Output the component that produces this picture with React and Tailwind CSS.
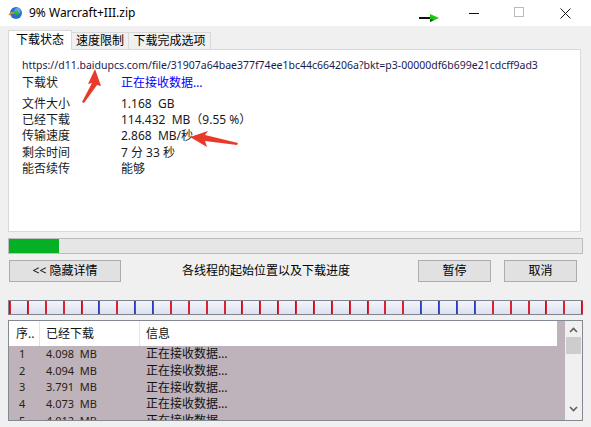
import React from "react";

const FONT = { fontFamily: '"Noto Sans", "Noto Sans CJK SC", sans-serif' };

const ticks = [
  "b","b","r","r","b","b","r","b","b","r","r","r","r","b","b","b",
  "b","b","b","b","b","r","r","b","b","b","b","r","r","r","b","r","b",
];

function ThreadBar() {
  return (
    <div className="relative mt-[18px] h-[15px] w-[575px] border border-[#7d8391] bg-gradient-to-b from-[#f4f5fb] to-[#dde0ee]">
      {ticks.map((t, i) => (
        <div
          key={i}
          className="absolute top-0 h-full w-[2px]"
          style={{
            left: `${Math.round(i * 17.88)}px`,
            background:
              t === "b"
                ? "linear-gradient(to right,#2a3cc0 0%,#2a3cc0 45%,#e0202a 46%,#e0202a 100%)"
                : "#e0202a",
          }}
        />
      ))}
    </div>
  );
}

function Row({ label, value, className = "", valueClass = "" }) {
  return (
    <div className={`flex h-[16px] items-center text-[12px] leading-[16px] text-[#1a1a1a] ${className}`}>
      <div className="w-[99px]">{label}</div>
      <div className={`whitespace-pre ${valueClass}`}>{value}</div>
    </div>
  );
}

const listRows = [
  ["1", "4.098  MB"],
  ["2", "4.094  MB"],
  ["3", "3.791  MB"],
  ["4", "4.073  MB"],
  ["5", "4.012  MB"],
];

export default function App() {
  return (
    <div className="relative h-[427px] w-[591px] overflow-hidden bg-[#f0f0f0]" style={FONT}>
      {/* title bar */}
      <div className="relative flex h-[26px] items-center bg-white">
        <svg className="ml-[8px]" width="15" height="14" viewBox="0 0 15 14">
          <circle cx="8" cy="7" r="6" fill="#2a6fcf" />
          <circle cx="9.5" cy="5" r="3" fill="#7ec0ff" opacity="0.7" />
          <path d="M1 9 Q4 3 9 6 L8 3.5 L12 7.5 L7 10 L8 8 Q4 7 1 9Z" fill="#2fb52f" />
          <path d="M1 9 Q3 6 6 7" stroke="#f08a1c" strokeWidth="1.6" fill="none" />
        </svg>
        <span className="ml-[6px] text-[12px] text-[#000]">9% Warcraft+III.zip</span>
        {/* green arrow indicator */}
        <div className="absolute left-[419px] top-[14px] flex items-center">
          <div className="h-[2px] w-[11px] bg-[#111]" />
          <svg width="9" height="8" viewBox="0 0 9 8">
            <polygon points="0,0 9,4 0,8" fill="#16c716" />
            <polygon points="0,5 4,6 0,8" fill="#0a5a0a" />
          </svg>
        </div>
        <div className="absolute left-[469px] top-[13px] h-[1px] w-[10px] bg-[#111]" />
        <div className="absolute left-[514px] top-[7px] h-[10px] w-[10px] border border-[#bbb]" />
        <svg className="absolute left-[560px] top-[8px]" width="11" height="11" viewBox="0 0 11 11">
          <path d="M0.5 0.5 L10.5 10.5 M10.5 0.5 L0.5 10.5" stroke="#111" strokeWidth="1" />
        </svg>
      </div>

      <div className="pl-[8px]">
        {/* tabs */}
        <div className="mt-[3px] flex h-[20px] items-end text-[12px] text-[#000]">
          <div className="relative z-10 -mb-px flex h-[20px] w-[64px] items-center justify-center border border-b-0 border-[#d9d9d9] bg-white pb-[1px]">
            下载状态
          </div>
          <div className="flex h-[17px] w-[57px] items-center justify-center border border-l-0 border-b-0 border-[#d9d9d9] bg-[#f0f0f0]">
            速度限制
          </div>
          <div className="flex h-[17px] w-[82px] items-center justify-center border border-l-0 border-b-0 border-[#d9d9d9] bg-[#f0f0f0]">
            下载完成选项
          </div>
        </div>

        {/* panel */}
        <div className="h-[183px] w-[573px] border border-[#d9d9d9] bg-white pl-[13px] pt-[7px]">
          <div className="h-[16px] whitespace-nowrap text-[10.5px] leading-[16px] text-[#1a1a50]">
            https://d11.baidupcs.com/file/31907a64bae377f74ee1bc44c664206a?bkt=p3-00000df6b699e21cdcff9ad3
          </div>
          <Row className="mt-[2px]" label="下载状" value="正在接收数据…" valueClass="text-[#0000ff]" />
          <Row className="mt-[5px]" label="文件大小" value="1.168  GB" />
          <Row label="已经下载" value="114.432  MB（9.55 %）" />
          <Row label="传输速度" value="2.868  MB/秒" />
          <Row className="h-[17px]" label="剩余时间" value="7 分 33 秒" />
          <Row label="能否续传" value="能够" />
        </div>

        {/* progress */}
        <div className="mt-[6px] h-[16px] w-[575px] border border-[#bcbcbc] bg-[#e6e6e6]">
          <div className="h-full w-[50px] bg-[#06b025]" />
        </div>

        {/* buttons */}
        <div className="mt-[6px] flex h-[22px] items-center text-[12px] text-[#000]">
          <div className="ml-[1px] flex h-[22px] w-[112px] items-center justify-center border border-[#adadad] bg-[#e1e1e1]">
            &lt;&lt; 隐藏详情
          </div>
          <div className="ml-[61px] w-[236px]">各线程的起始位置以及下载进度</div>
          <div className="flex h-[22px] w-[73px] items-center justify-center border border-[#adadad] bg-[#e1e1e1]">
            暂停
          </div>
          <div className="ml-[13px] flex h-[22px] w-[73px] items-center justify-center border border-[#adadad] bg-[#e1e1e1]">
            取消
          </div>
        </div>

        <ThreadBar />

        {/* list */}
        <div className="mt-[5px] flex h-[101px] w-[575px] border border-[#848891] bg-[#beb3bb] text-[12px] text-[#111]">
          <div className="flex-1 overflow-hidden">
            <div className="flex h-[25px] w-[548px] items-center bg-white">
              <div className="w-[30px] pl-[7px]">序..</div>
              <div className="h-full w-px bg-[#e5e5e5]" />
              <div className="w-[99px] pl-[6px]">已经下载</div>
              <div className="h-full w-px bg-[#e5e5e5]" />
              <div className="pl-[6px]">信息</div>
            </div>
            {listRows.map(([n, v]) => (
              <div key={n} className="flex h-[16.7px] items-center">
                <div className="w-[30px] pl-[10px] text-[11px] text-[#2a2010]">{n}</div>
                <div className="w-[100px] whitespace-pre pl-[7px] text-[11px] text-[#2a2010]">{v}</div>
                <div className="pl-[7px]">正在接收数据…</div>
              </div>
            ))}
          </div>
          <div className="flex w-[17px] flex-col items-center bg-[#f0f0f0]">
            <svg className="mt-[6px]" width="9" height="6" viewBox="0 0 9 6">
              <path d="M1 5 L4.5 1.5 L8 5" stroke="#606060" strokeWidth="1.6" fill="none" />
            </svg>
            <div className="mt-[4px] h-[17px] w-[15px] bg-[#cdcdcd]" />
            <div className="flex-1" />
            <svg className="mb-[8px]" width="9" height="6" viewBox="0 0 9 6">
              <path d="M1 1 L4.5 4.5 L8 1" stroke="#606060" strokeWidth="1.6" fill="none" />
            </svg>
          </div>
        </div>
      </div>

      {/* annotation arrows */}
      <svg className="pointer-events-none absolute left-0 top-0" width="591" height="427" viewBox="0 0 591 427">
        <polygon points="95,69 101,86 97,85 84,103 82,102 92,83 88,84" fill="#e8392a" />
        <polygon points="190,137 208,131 205,135 238,143 237,145 205,141 207,147" fill="#e8392a" />
      </svg>
    </div>
  );
}
